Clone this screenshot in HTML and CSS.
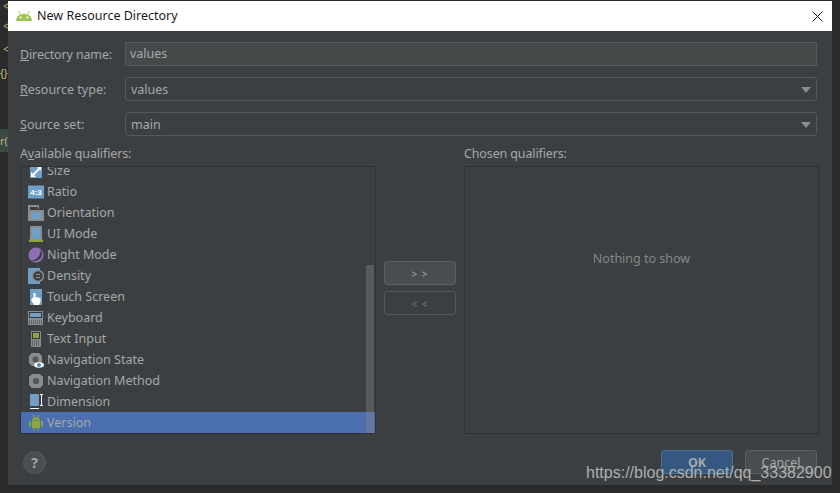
FILE: index.html
```html
<!DOCTYPE html>
<html lang="en">
<head>
<meta charset="utf-8">
<title>New Resource Directory</title>
<link rel="stylesheet" href="styles.css">
</head>
<body>
<div class="backdrop">
  <span class="code c1">&lt;</span><span class="code c2">&lt;</span><span class="code c3">&lt;</span><span class="code c4">{}</span>
  <span class="code-hl">r(</span>
</div>
<main class="dialog">
  <header class="titlebar">
    <svg class="logo" width="16" height="10" viewBox="0 0 16 10"><path fill="#9fc55a" d="M0 10C.4 5.500 3 3 8 3s7.600 2.500 8 7Z"/><path stroke="#9fc55a" stroke-width="1" d="M2.500 0 4.500 3.500M13.500 0 11.500 3.500"/><circle cx="4.500" cy="6.500" r="1" fill="#fff"/><circle cx="11.500" cy="6.500" r="1" fill="#fff"/></svg>
    <span class="title">New Resource Directory</span>
    <svg class="close" width="11" height="11" viewBox="0 0 11 11"><path stroke="#111" stroke-width="1" d="M.5 .5 10.500 10.500M10.500 .5 .5 10.500"/></svg>
  </header>
  <div class="body">
    <div class="form">
      <label class="label tight"><u>D</u>irectory name:</label>
      <div class="field text">values</div>
      <label class="label"><u>R</u>esource type:</label>
      <div class="field combo">values<i class="arrow"></i></div>
      <label class="label"><u>S</u>ource set:</label>
      <div class="field combo">main<i class="arrow"></i></div>
    </div>
    <div class="columns">
      <section class="col">
        <div class="col-label tight">A<u>v</u>ailable qualifiers:</div>
        <div class="list">
          <ul class="rows">
            <li class="row"><svg class="ico" viewBox="0 0 16 16"><rect x="2" y="1" width="12" height="14" fill="#6f9fc6"/><path stroke="#fff" stroke-width="2" d="M3.500 13.500 12 5" fill="none"/><path fill="#fff" d="M8 3h5v5ZM3 9v5h5Z"/></svg><span>Size</span></li>
            <li class="row"><svg class="ico" viewBox="0 0 16 16"><rect y="1.500" width="16" height="13" fill="#6f9fc6"/><text x="8" y="11" class="ratio-text">4:3</text></svg><span>Ratio</span></li>
            <li class="row"><svg class="ico" viewBox="0 0 16 16"><path fill="#8a8d8f" d="M0 0h11v4h-1V2H2v14H0Z"/><rect x="2" y="5" width="14" height="11" fill="#8a8d8f"/><rect x="3" y="7" width="10" height="7" fill="#6f9fc6"/></svg><span>Orientation</span></li>
            <li class="row"><svg class="ico" viewBox="0 0 16 16"><rect x="2" y="0" width="12" height="14" fill="#8a8d8f"/><rect x="4" y="2" width="8" height="11" fill="#6f9fc6"/><rect x="1" y="13.500" width="14" height="2.500" fill="#8aa63c"/></svg><span>UI Mode</span></li>
            <li class="row"><svg class="ico" viewBox="0 0 16 16"><circle cx="8" cy="8" r="7.500" fill="#8f6fb5"/><path d="M3.500 13.500c5 1.500 10.500-1.500 10.500-6.500 0-1.500-.5-3-1.500-4 .5 5-3.500 10-9 10.500Z" fill="#3a3c3e"/></svg><span>Night Mode</span></li>
            <li class="row"><svg class="ico" viewBox="0 0 16 16"><rect width="12" height="16" fill="#6f9fc6"/><circle cx="10" cy="8" r="5.500" fill="#3c3f41" stroke="#8a8d8f" stroke-width="1.500"/><path stroke="#a9b7c6" d="M8 6.500h1.500M10.500 6.500H12M8 9.500h1.500M10.500 9.500H12"/></svg><span>Density</span></li>
            <li class="row"><svg class="ico" viewBox="0 0 16 16"><rect x="2" y="0" width="12" height="16" fill="#6f9fc6"/><path fill="#fff" d="M5.500 8V4h2v4l5 1v4l-1.500 3H6L3 10.500l1-1Z"/></svg><span>Touch Screen</span></li>
            <li class="row"><svg class="ico" viewBox="0 0 16 16"><rect y="1" width="15" height="14" fill="#8a8d8f"/><rect x="1" y="2" width="13" height="6" fill="#35373a"/><rect x="2" y="3" width="11" height="4" fill="#6f9fc6"/><path stroke="#3c3f41" stroke-dasharray="1 1" d="M1 11h13M1 13h13"/></svg><span>Keyboard</span></li>
            <li class="row"><svg class="ico" viewBox="0 0 16 16"><rect x="3" y="0" width="10" height="16" rx="1" fill="#8a8d8f"/><rect x="4" y="1" width="8" height="7" fill="#35373a"/><rect x="5" y="2" width="6" height="5" fill="#8aa63c"/><path stroke="#3c3f41" stroke-dasharray="1 1" d="M4 10h8M4 12h8M4 14h8"/></svg><span>Text Input</span></li>
            <li class="row"><svg class="ico" viewBox="0 0 16 16"><path fill="#8a8d8f" d="M4 1h7l3 3v7l-3 3H4L1 11V4Z"/><circle cx="7.500" cy="7.500" r="3" fill="#54575a"/><ellipse cx="11" cy="13" rx="5" ry="2.800" fill="#fff"/><circle cx="11" cy="13" r="2" fill="#4a88c7"/></svg><span>Navigation State</span></li>
            <li class="row"><svg class="ico" viewBox="0 0 16 16"><path fill="#8a8d8f" d="M4 1h8l3 3v8l-3 3H4L1 12V4Z"/><circle cx="8" cy="8" r="3.200" fill="#54575a"/></svg><span>Navigation Method</span></li>
            <li class="row"><svg class="ico" viewBox="0 0 16 16"><rect x="2" y="0" width="9" height="12" fill="#6f9fc6"/><path stroke="#fff" d="M13.500 0v12M12 .5h3M12 11.500h3M2 14.500h9"/></svg><span>Dimension</span></li>
            <li class="row selected"><svg class="ico" viewBox="0 0 16 16"><path fill="#8aa63c" d="M4 5.500C4 3 6 2 8 2s4 1 4 3.500ZM4 6h8v7h-1.500v3h-1v-3h-3v3h-1v-3H4ZM1 6h2v6H1ZM13 6h2v6h-2Z"/><path stroke="#8aa63c" d="M5 0 6 2.500M11 0 10 2.500"/></svg><span>Version</span></li>
          </ul>
          <div class="scroll"><div class="thumb"></div></div>
        </div>
      </section>
      <div class="move">
        <button class="btn-move" type="button">&gt; &gt;</button>
        <button class="btn-move off" type="button">&lt; &lt;</button>
      </div>
      <section class="col">
        <div class="col-label tight">Chosen qualifiers:</div>
        <div class="list empty">Nothing to show</div>
      </section>
    </div>
    <footer class="footer">
      <span class="help">?</span>
      <span class="spacer"></span>
      <button class="btn ok" type="button">OK</button>
      <button class="btn" type="button">Cancel</button>
    </footer>
  </div>
</main>
<span class="watermark">https://blog.csdn.net/qq_33382900</span>
</body>
</html>
```
FILE: styles.css
```css
* { box-sizing: border-box; }
html, body { margin: 0; height: 100%; }
body {
  position: relative;
  width: 840px;
  height: 493px;
  overflow: hidden;
  background: #2a2a2a;
  padding: 1px 8px 0;
  font-family: "Noto Sans", "Open Sans", sans-serif;
  font-size: 12.5px;
  color: #a0a4a7;
}
.backdrop { position: absolute; left: 0; top: 0; width: 8px; height: 493px; overflow: hidden; background: #2b2b2b; }
.code { position: absolute; left: 3px; color: #c8b27a; font-size: 10px; line-height: 12px; }
.c1 { top: 0; } .c2 { top: 20px; } .c3 { top: 43px; } .c4 { top: 67px; left: 0; color: #c9c27a; }
.code-hl { position: absolute; left: 0; top: 129px; width: 8px; height: 23px; background: #3a4b45; color: #c8b27a; font-size: 11px; line-height: 23px; }
.dialog { position: relative; width: 824px; height: 484px; background: #3c3f41; }
.titlebar { height: 30px; background: #fff; display: flex; align-items: center; padding: 0 9px 0 8px; color: #1a1a1a; }
.logo { margin-right: 5px; }
.title { font-size: 12.5px; flex: 1; position: relative; top: -1px; }
.body { padding: 11px 13px 0 12px; display: flex; flex-direction: column; height: 454px; }
.form { display: grid; grid-template-columns: 105px 692px; row-gap: 11px; align-items: center; }
.label { color: #a4a8aa; }
.tight { letter-spacing: -.13px; }
.field { height: 24px; border: 1px solid #56595b; padding: 0 4px; line-height: 22px; color: #a4a8aa; position: relative; }
.text { background: #45494a; }
.combo { background: #3c3f41; border-radius: 3px; padding: 1px 4px 0 5px; }
.arrow { position: absolute; right: 5px; top: 9px; width: 0; height: 0; border-left: 5px solid transparent; border-right: 5px solid transparent; border-top: 6px solid #8a8d8f; }
.columns { display: flex; margin-top: 9px; height: 304px; }
.col { display: flex; flex-direction: column; }
.col:first-child { width: 356px; }
.col:last-child { width: 355px; }
.col-label { height: 21px; line-height: 17px; color: #a4a8aa; }
.list { height: 268px; border: 1px solid #323232; position: relative; overflow: hidden; }
.rows { list-style: none; margin: -7px 0 0; padding: 0; }
.row { height: 21px; display: flex; align-items: center; padding-left: 7px; gap: 3px; color: #a4a8aa; }
.ico { width: 16px; height: 16px; flex: none; }
.ratio-text { font: 700 8px "Liberation Sans", sans-serif; fill: #fff; text-anchor: middle; }
.selected { background: #4b6eaf; }
.scroll { position: absolute; right: 0; top: 0; bottom: 0; width: 9px; }
.thumb { position: absolute; top: 98px; bottom: 0; left: 0; right: 0; margin-right: 1px; background: rgba(140,140,140,.35); }
.move { width: 88px; padding-top: 116px; display: flex; flex-direction: column; align-items: center; gap: 6px; }
.btn-move { width: 72px; height: 24px; flex: none; border: 1px solid #5e6163; border-radius: 3px; background: #4a4d4f; color: #a4a8aa; font: 10px "Noto Sans", sans-serif; letter-spacing: 1px; padding: 2px 0 0; }
.off { background: transparent; color: #777; border-color: #56595b; }
.empty { display: flex; align-items: center; justify-content: center; color: #85888a; padding-bottom: 84px; }
.footer { display: flex; align-items: flex-start; }
.help { width: 23px; height: 23px; margin: 2px 0 0 3px; border-radius: 50%; background: #4b4e50; border: 1px solid #56595b; color: #a4a8aa; font-weight: 700; font-size: 14px; line-height: 21px; text-align: center; }
.spacer { flex: 1; }
.btn { width: 72px; height: 24px; margin-left: 12px; margin-top: 1px; border: 1px solid #5e6163; border-radius: 3px; background: #4a4d4f; color: #a4a8aa; font: 12.5px "Noto Sans", sans-serif; padding: 0; }
.btn + .btn { margin-right: 2px; }
.ok { background: #365880; border-color: #4c708c; font-weight: 700; }
.watermark { position: absolute; left: 586px; top: 464px; font: 16px "Liberation Sans", Arial, sans-serif; color: #b9bbbc; opacity: .9; }
```
